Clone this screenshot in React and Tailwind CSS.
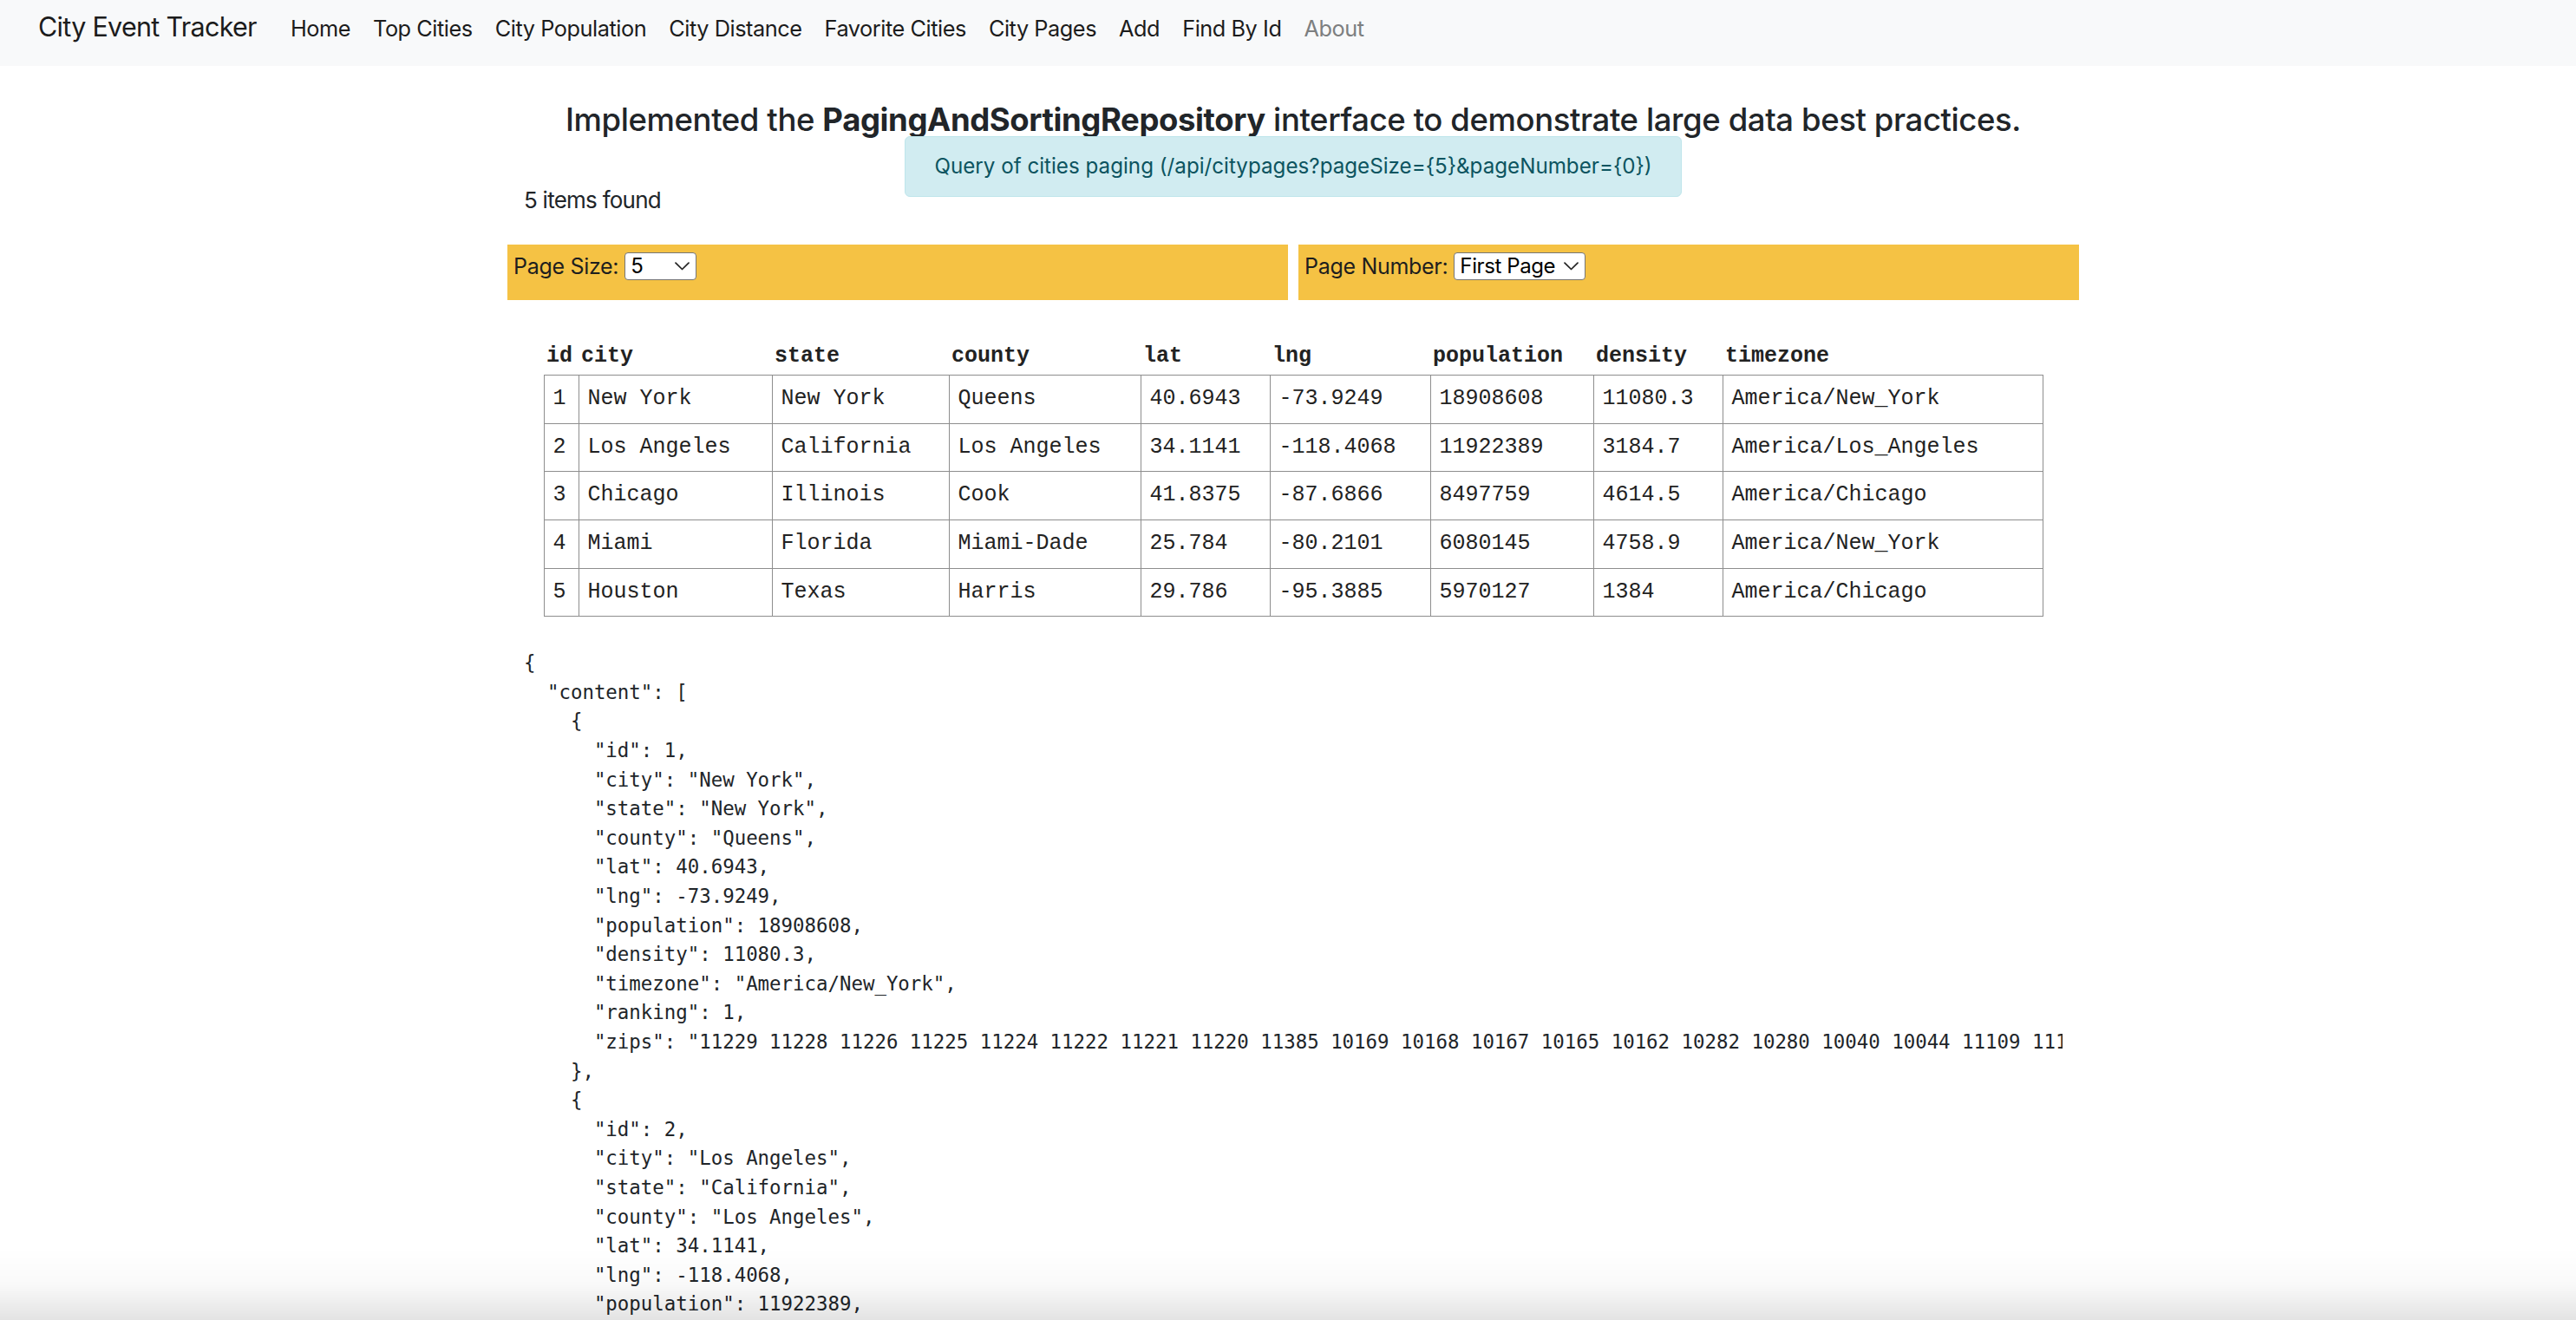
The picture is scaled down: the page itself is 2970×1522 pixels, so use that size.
import React from "react";

const rows = [
  { id: 1, city: "New York", state: "New York", county: "Queens", lat: "40.6943", lng: "-73.9249", population: "18908608", density: "11080.3", timezone: "America/New_York" },
  { id: 2, city: "Los Angeles", state: "California", county: "Los Angeles", lat: "34.1141", lng: "-118.4068", population: "11922389", density: "3184.7", timezone: "America/Los_Angeles" },
  { id: 3, city: "Chicago", state: "Illinois", county: "Cook", lat: "41.8375", lng: "-87.6866", population: "8497759", density: "4614.5", timezone: "America/Chicago" },
  { id: 4, city: "Miami", state: "Florida", county: "Miami-Dade", lat: "25.784", lng: "-80.2101", population: "6080145", density: "4758.9", timezone: "America/New_York" },
  { id: 5, city: "Houston", state: "Texas", county: "Harris", lat: "29.786", lng: "-95.3885", population: "5970127", density: "1384", timezone: "America/Chicago" },
];

const cols = [
  { key: "id", w: "w-[40px]" },
  { key: "city", w: "w-[223px]" },
  { key: "state", w: "w-[204px]" },
  { key: "county", w: "w-[221px]" },
  { key: "lat", w: "w-[149px]" },
  { key: "lng", w: "w-[185px]" },
  { key: "population", w: "w-[188px]" },
  { key: "density", w: "w-[149px]" },
  { key: "timezone", w: "w-[369px]" },
];

const zips1 =
  "11229 11228 11226 11225 11224 11222 11221 11220 11385 10169 10168 10167 10165 10162 10282 10280 10040 10044 11109 11101 11104 11105 11102 11103 11106 11693 11692 11691 11694 11697 10001 10002 10003";
const zips2 =
  "91367 90291 90293 90292 91316 91311 90037 90031 90008 90004 90005 90006 90007 90001 90002 90003 90710";

const json = `{
  "content": [
    {
      "id": 1,
      "city": "New York",
      "state": "New York",
      "county": "Queens",
      "lat": 40.6943,
      "lng": -73.9249,
      "population": 18908608,
      "density": 11080.3,
      "timezone": "America/New_York",
      "ranking": 1,
      "zips": "${zips1}"
    },
    {
      "id": 2,
      "city": "Los Angeles",
      "state": "California",
      "county": "Los Angeles",
      "lat": 34.1141,
      "lng": -118.4068,
      "population": 11922389,
      "density": 3184.7,
      "timezone": "America/Los_Angeles",
      "ranking": 1,
      "zips": "${zips2}"
    }
  ]
}`;

const links = ["Home", "Top Cities", "City Population", "City Distance", "Favorite Cities", "City Pages", "Add", "Find By Id"];

function Chevron() {
  return (
    <svg width="17" height="10" viewBox="0 0 17 10" fill="none">
      <path d="M1 1.2 L8.5 8.5 L16 1.2" stroke="#222" strokeWidth="1.7" strokeLinecap="round" strokeLinejoin="round" />
    </svg>
  );
}

function FakeSelect({ value, width }) {
  return (
    <div className={`flex h-[32px] items-center justify-between rounded-[4px] border border-[#767676] bg-white pl-[6px] pr-[7px] text-black ${width}`}>
      <span className="text-[24px] leading-[30px] tracking-[-0.4px]">{value}</span>
      <Chevron />
    </div>
  );
}

export default function App() {
  return (
    <div className="relative min-h-screen bg-white font-['Inter',sans-serif] text-[#212529]">
      <nav className="flex h-[76px] items-baseline bg-[#f8f9fa] pl-[44px] pt-[11px]">
        <span className="mr-[39px] text-[30.5px] leading-[40px] tracking-[-0.7px] text-[#1c1c1c]">City Event Tracker</span>
        <div className="flex items-baseline gap-[26px]">
          {links.map((l) => (
            <span key={l} className="text-[25.3px] leading-[40px] tracking-[-0.45px] text-[#1c1c1c]">{l}</span>
          ))}
          <span className="text-[25.3px] leading-[40px] tracking-[-0.45px] text-[#7d7f80]">About</span>
        </div>
      </nav>

      <div className="pl-[12px]">
        <div className="mx-auto w-[1812px]">
          <h4 className="mt-[40px] text-center text-[36.5px] font-medium leading-[44px] tracking-[-0.4px]">
            Implemented the <span className="font-bold">PagingAndSortingRepository</span> interface to demonstrate large data best practices.
          </h4>

          <div className="mt-[-3px] grid grid-cols-[1fr_auto_1fr]">
            <div className="mb-[-23px] self-end pl-[19px] text-[26px] leading-[39px] tracking-[-0.75px]">5 items found</div>
            <div className="flex h-[70px] items-center rounded-[6px] border border-[#bee5eb] bg-[#d1ecf1] px-[33px] text-[24.2px] text-[#0c5460]">
              Query of cities paging (/api/citypages?pageSize=&#123;5&#125;&amp;pageNumber=&#123;0&#125;)
            </div>
            <div />
          </div>

          <div className="mt-[55px] grid grid-cols-2 gap-[12px]">
            <div className="h-[64px] bg-[#f5c244] pl-[7px] pt-[9px]">
              <div className="flex h-[32px] items-center gap-[7px]">
                <span className="text-[25px] leading-[32px] tracking-[-0.3px] text-[#1e1e1e]">Page Size:</span>
                <FakeSelect value="5" width="w-[83px]" />
              </div>
            </div>
            <div className="h-[64px] bg-[#f5c244] pl-[7px] pt-[9px]">
              <div className="flex h-[32px] items-center gap-[7px]">
                <span className="text-[25px] leading-[32px] tracking-[-0.3px] text-[#1e1e1e]">Page Number:</span>
                <FakeSelect value="First Page" width="w-[152px]" />
              </div>
            </div>
          </div>

          <table className="mx-auto mt-[43px] w-[1728px] table-fixed border-collapse font-['Liberation_Mono','Courier_New',monospace] text-[25px] text-[#222]">
            <colgroup>
              {cols.map((c) => (
                <col key={c.key} className={c.w} />
              ))}
            </colgroup>
            <thead>
              <tr>
                {cols.map((c) => (
                  <th key={c.key} className="px-[3px] pb-[7px] pt-[8px] text-left font-bold leading-[28.3px]">
                    {c.key}
                  </th>
                ))}
              </tr>
            </thead>
            <tbody>
              {rows.map((r) => (
                <tr key={r.id}>
                  {cols.map((c) => (
                    <td key={c.key} className="whitespace-nowrap border border-[#8e8e8e] px-[10px] py-[13px] leading-[28.6px]">
                      {r[c.key]}
                    </td>
                  ))}
                </tr>
              ))}
            </tbody>
          </table>

          <div className="mt-[37px] px-[19px]">
            <pre className="overflow-hidden font-['DejaVu_Sans_Mono',monospace] text-[22.4px] leading-[33.6px] text-[#212529]">
              {json}
            </pre>
          </div>
        </div>
      </div>

      <div className="pointer-events-none fixed inset-x-0 bottom-0 h-[82px] bg-[linear-gradient(to_bottom,rgba(0,0,0,0),rgba(0,0,0,0.025)_50%,rgba(0,0,0,0.11))]" />
    </div>
  );
}
